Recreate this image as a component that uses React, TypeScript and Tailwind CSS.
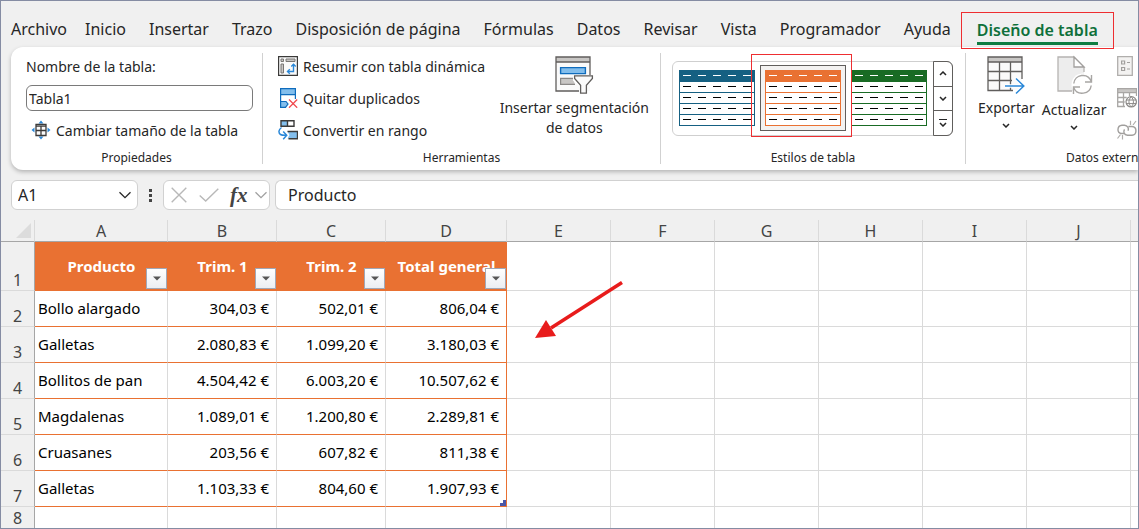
import { useState } from "react";
import type { ReactNode } from "react";

const TABS = [
  "Archivo",
  "Inicio",
  "Insertar",
  "Trazo",
  "Disposición de página",
  "Fórmulas",
  "Datos",
  "Revisar",
  "Vista",
  "Programador",
  "Ayuda",
];

const HEADERS = ["Producto", "Trim. 1", "Trim. 2", "Total general"];

const ROWS = [
  ["Bollo alargado", "304,03 €", "502,01 €", "806,04 €"],
  ["Galletas", "2.080,83 €", "1.099,20 €", "3.180,03 €"],
  ["Bollitos de pan", "4.504,42 €", "6.003,20 €", "10.507,62 €"],
  ["Magdalenas", "1.089,01 €", "1.200,80 €", "2.289,81 €"],
  ["Cruasanes", "203,56 €", "607,82 €", "811,38 €"],
  ["Galletas", "1.103,33 €", "804,60 €", "1.907,93 €"],
];

const COLUMNS = ["A", "B", "C", "D", "E", "F", "G", "H", "I", "J"];
const EMPTY = COLUMNS.slice(4);

const STYLES = [
  { name: "Azul", color: "#156082" },
  { name: "Naranja", color: "#e97132" },
  { name: "Verde", color: "#196b24" },
];

function Chevron({ up = false, className = "" }: { up?: boolean; className?: string }) {
  return (
    <svg width="8" height="5" viewBox="0 0 8 5" fill="none" className={className}>
      <path d={up ? "M1 4l3-3 3 3" : "M1 1l3 3 3-3"} stroke="currentColor" strokeWidth="1.5" />
    </svg>
  );
}

function WideChevron() {
  return (
    <svg width="12" height="8" viewBox="0 0 12 8" fill="none">
      <path d="M.5 1.2L6 6.7l5.500-5.500" stroke="currentColor" strokeWidth="1.3" />
    </svg>
  );
}

function ResizeIcon() {
  return (
    <svg width="20" height="20" viewBox="0 0 20 20" fill="none">
      <path d="M10 .5l2.500 3h-5zM10 19.500l2.500-3h-5zM.5 10l3-2.500v5zM19.500 10l-3-2.500v5z" fill="#2b88d8" />
      <path d="M5 4.500h10v11H5z" fill="#fafafa" stroke="#3b3a39" strokeWidth="1.300" />
      <path d="M5 6.200h10M5 10.500h10M10 6v9.500" stroke="#3b3a39" strokeWidth="1.300" />
    </svg>
  );
}

function PivotIcon() {
  return (
    <svg width="20" height="20" viewBox="0 0 20 20" fill="none">
      <path d="M.6.600h18.800v18.800H.6z" fill="#fafafa" stroke="#3b3a39" strokeWidth="1.200" />
      <path d="M3 3h2.500v2.500H3zM8 3h9v2.500H8zM3 8h2.500v9H3z" fill="#c8c6c4" stroke="#797775" />
      <path d="M15.500 8.500v7H10" stroke="#2b88d8" strokeWidth="1.400" />
      <path d="M13.300 10.500L15.500 8.200l2.200 2.300M11.800 13.300l-2.300 2.200 2.300 2.200" stroke="#2b88d8" strokeWidth="1.400" />
    </svg>
  );
}

function DuplicatesIcon() {
  return (
    <svg width="20" height="20" viewBox="0 0 20 20" fill="none">
      <path d="M2.600.600h14.800v6H2.600z" fill="#83beec" stroke="#0f6cbd" strokeWidth="1.200" />
      <path d="M2.600 7v12.400H8M17.400 7v4" stroke="#0f6cbd" strokeWidth="1.200" />
      <path d="M2.600 13.500H8l2 2.500-2.500 3.400H2.600z" fill="#83beec" stroke="#0f6cbd" strokeWidth="1.200" />
      <path d="M11 11.500l8.200 8.200M19.200 11.500L11 19.700" stroke="#f0494e" strokeWidth="1.300" />
    </svg>
  );
}

function RangeIcon() {
  return (
    <svg width="20" height="20" viewBox="0 0 20 20" fill="none">
      <path d="M3 .700h6.500v5.600H3z" fill="#83beec" />
      <path d="M3 .700h13v5.600H3zM9.500.700v5.600" stroke="#3b3a39" strokeWidth="1.400" />
      <path d="M9.500 11.500h10v7h-10l2-3.500z" fill="#83beec" />
      <path d="M9.500 11.500h10v7.200h-9" stroke="#3b3a39" strokeWidth="1.400" />
      <path d="M3.500 7.500C.5 9.500.2 13 2.500 14.500c1.500 1 3.500.800 6 .800M5.200 11.500l3.500 3.800-3.500 4" stroke="#2b88d8" strokeWidth="1.500" />
    </svg>
  );
}

function SlicerIcon() {
  return (
    <svg width="40" height="40" viewBox="0 0 40 40" fill="none">
      <path d="M2 2h34v34H2z" fill="#fafafa" />
      <path d="M2 2h34v5H2z" fill="#c8c6c4" />
      <path d="M26 36H2V2h34v18M2 7h34" stroke="#605e5c" strokeWidth="1.300" />
      <path d="M6.600 12.600h24.800v6H6.600z" fill="#83beec" stroke="#0f6cbd" strokeWidth="1.400" />
      <path d="M21 29.400H6.600v-6H19" fill="#c8c6c4" stroke="#8a8886" strokeWidth="1.200" />
      <path d="M19 20h20.500v4.500l-6.500 6.500v8h-8v-8L19 25.500z" fill="#fff" />
      <path d="M20.600 20.800h17.800v2.700l-6 6.700v8h-5.800v-8l-6-6.700z" fill="#fafafa" stroke="#605e5c" strokeWidth="1.300" />
    </svg>
  );
}

function ExportIcon() {
  return (
    <svg width="40" height="40" viewBox="0 0 40 40" fill="none">
      <path d="M2 2h34v33H2z" fill="#fafafa" />
      <path d="M2 2h34v5H2z" fill="#c8c6c4" />
      <path d="M27 35.500H2V2h34v22M2 7h34M2 16.500h34M2 25.500h24M13.500 7v28.500M24.500 7v28.500" stroke="#605e5c" strokeWidth="1.300" />
      <path d="M19 31h18.500M30 23.500l7.800 7.500-7.800 7.500" stroke="#fff" strokeWidth="3.500" />
      <path d="M19 31h18.500M30 23.500l7.800 7.500-7.800 7.500" stroke="#2b88d8" strokeWidth="1.500" />
    </svg>
  );
}

function RefreshIcon() {
  return (
    <svg width="40" height="40" viewBox="0 0 40 40" fill="none">
      <path d="M4 2h16l10 11v23H4z" fill="#ededed" />
      <path d="M18 36H4V2h16l10 10v5" stroke="#b5b3b1" strokeWidth="1.300" />
      <path d="M20 2v10h10z" fill="#fff" stroke="#a19f9d" strokeWidth="1.300" />
      <circle cx="28.500" cy="29.500" r="11" fill="#fff" />
      <path d="M19.800 28.500c.8-9 14-11.500 17.500-2M37.500 20v7H31M37.200 30.500c-1 8.800-14 11-17.500 2M19.500 39v-7H26" stroke="#a8a6a4" strokeWidth="1.400" />
    </svg>
  );
}

function PropertiesIcon() {
  return (
    <svg width="20" height="20" viewBox="0 0 20 20" fill="none">
      <path d="M.7.700h14.600v18.600H.7z" fill="#f3f2f1" stroke="#b0aeac" strokeWidth="1.300" />
      <path d="M4.600 5h3v3h-3zM4.600 11.500h3v3h-3zM10 6.500h3M10 13h3" stroke="#a19f9d" strokeWidth="1.200" />
    </svg>
  );
}

function BrowserIcon() {
  return (
    <svg width="20" height="20" viewBox="0 0 20 20" fill="none">
      <path d="M.7.700h19v4H.7z" fill="#c8c6c4" />
      <path d="M8 18.500H.7V.700h18.800V8M.7 4.700h19M.7 9.500h9M.7 14h7M6.500 5v13.500M12.500 5v3" stroke="#a8a6a4" strokeWidth="1.300" />
      <circle cx="14.200" cy="13.800" r="5.200" fill="#fff" stroke="#8a8886" strokeWidth="1.200" />
      <path d="M9 12h10.400M9 15.600h10.400M14.200 8.600c-3 3.500-3 7 0 10.400M14.200 8.600c3 3.500 3 7 0 10.400" stroke="#8a8886" />
    </svg>
  );
}

function UnlinkIcon() {
  return (
    <svg width="20" height="20" viewBox="0 0 20 20" fill="none">
      <path d="M7 13.500H4.500C-.5 13 0 5.500 5 5.200h2.500c3 .2 4.700 3 3.500 5.500M11.500 6.500h3.500c5.500.500 5 8.500 0 8.800h-4.500c-3.500-.3-4.500-3.500-3-6" stroke="#a19f9d" strokeWidth="1.400" />
      <path d="M13.500 5V.800M16 5l3-4M5.500 15v4.500M3.500 14.500l-3 4" stroke="#b0aeac" strokeWidth="1.200" />
    </svg>
  );
}

function StyleThumb({ color }: { color: string }) {
  return (
    <svg width="76" height="56" viewBox="0 0 76 56" fill="none" shapeRendering="crispEdges">
      <path d="M0 0h76v56H0z" fill="#fff" />
      <path d="M0 0h76v12H0z" fill={color} />
      <path d="M.5.500h75v55H.5zM0 22.500h76M0 33.500h76M0 44.500h76" stroke={color} />
      <path d="M4 5.500h68" stroke="#fff" strokeDasharray="8 7" />
      <path d="M4 16.500h68M4 27.500h68M4 38.500h68M4 49.500h68" stroke="#000" strokeDasharray="8 7" />
    </svg>
  );
}

function Group({ label, className, children }: { label: string; className: string; children: ReactNode }) {
  return (
    <section className={`flex shrink-0 flex-col border-r border-[#d1d1d1] ${className}`}>
      <div className="flex-1">{children}</div>
      <h2 className="text-center text-[12px] leading-3 whitespace-nowrap">{label}</h2>
    </section>
  );
}

function ToolButton({ icon, children }: { icon: ReactNode; children: ReactNode }) {
  return (
    <button className="flex h-8 items-center gap-[5px] whitespace-nowrap">
      {icon}
      {children}
    </button>
  );
}

export default function App() {
  const [tableName, setTableName] = useState("Tabla1");
  const [cell, setCell] = useState("A1");
  const [formula, setFormula] = useState("Producto");
  const [style, setStyle] = useState("Naranja");

  return (
    <div className="w-full overflow-hidden border border-[#858ca3] bg-[#f0f0f0] font-['Noto_Sans','Open_Sans',sans-serif] text-[14px] text-[#262626]">
      <nav className="flex h-[46px] items-end gap-[23px] pl-[10px] text-[16px] whitespace-nowrap">
        {TABS.map((tab) => (
          <button key={tab} className="h-9 first:-mr-[5px]">
            {tab}
          </button>
        ))}
        <div className="z-10 -mb-[2px] -ml-[13px] h-[37px] border border-[#ee2e31] px-[15px]">
          <button className="h-8 border-b-3 border-[#107c41] pt-[5px] leading-6 font-semibold text-[#0f703b]">
            Diseño de tabla
          </button>
        </div>
      </nav>

      <div className="ml-[10px] flex h-[123px] overflow-hidden rounded-l-xl bg-white pt-[6px] pb-[6px] shadow-[0_2px_4px_rgba(0,0,0,0.25)]">
        <Group label="Propiedades" className="w-[252px]">
          <div className="pr-[9px] pl-[15px]">
            <label htmlFor="table-name" className="block h-8 pt-1 leading-5">
              Nombre de la tabla:
            </label>
            <input
              id="table-name"
              className="block h-[26px] w-full rounded-md border border-[#7a7a7a] bg-white px-[2px] outline-none"
              value={tableName}
              onChange={(e) => setTableName(e.target.value)}
            />
            <div className="pt-[3px] pl-[5px]">
              <ToolButton icon={<ResizeIcon />}>Cambiar tamaño de la tabla</ToolButton>
            </div>
          </div>
        </Group>

        <Group label="Herramientas" className="w-[398px]">
          <div className="flex justify-between pr-[11px] pl-[15px]">
            <div className="-mt-[3px]">
              <ToolButton icon={<PivotIcon />}>Resumir con tabla dinámica</ToolButton>
              <ToolButton icon={<DuplicatesIcon />}>Quitar duplicados</ToolButton>
              <ToolButton icon={<RangeIcon />}>Convertir en rango</ToolButton>
            </div>
            <button className="flex flex-col items-center pt-[2px] leading-5">
              <SlicerIcon />
              <span className="pt-[3px]">
                Insertar segmentación
                <br />
                de datos
              </span>
            </button>
          </div>
        </Group>

        <Group label="Estilos de tabla" className="w-[305px]">
          <div className="mt-2 ml-[11px] flex h-[75px] w-[281px] rounded-md border border-[#cfcfcf]">
            <div className="flex flex-1 items-start pt-[3px] pl-px">
              {STYLES.map((s) => (
                <div key={s.name} className="relative">
                  <button
                    aria-label={s.name}
                    aria-pressed={style === s.name}
                    onClick={() => setStyle(s.name)}
                    className="block border border-transparent p-1 aria-pressed:border-[#605e5c] aria-pressed:bg-[#f3f2f1]"
                  >
                    <StyleThumb color={s.color} />
                  </button>
                  {s.name === "Naranja" && (
                    <span className="pointer-events-none absolute -top-[11px] -right-[6px] -bottom-[6px] -left-[9px] z-10 border border-[#ee2e31]" />
                  )}
                </div>
              ))}
            </div>
            <div className="-my-px -mr-px flex w-5 flex-col divide-y divide-[#605e5c] rounded-r-md border border-[#605e5c]">
              <button aria-label="Anterior" className="flex flex-1 items-center justify-center">
                <Chevron up />
              </button>
              <button aria-label="Siguiente" className="flex flex-1 items-center justify-center">
                <Chevron />
              </button>
              <button aria-label="Más" className="flex flex-1 flex-col items-center justify-center gap-[2px]">
                <span className="w-2 border-t border-[#262626]" />
                <Chevron />
              </button>
            </div>
          </div>
        </Group>

        <section className="flex min-w-0 flex-1 flex-col">
          <div className="flex flex-1 items-start">
            <button className="ml-3 flex shrink-0 flex-col items-center pt-[2px] leading-5">
              <ExportIcon />
              <span className="pt-[3px]">Exportar</span>
              <Chevron className="mt-[5px]" />
            </button>
            <button className="ml-[7px] flex shrink-0 flex-col items-center pt-[2px] leading-5">
              <RefreshIcon />
              <span className="pt-[5px]">Actualizar</span>
              <Chevron className="mt-[5px]" />
            </button>
            <div className="ml-[11px] flex shrink-0 flex-col gap-3 pt-[3px]">
              <button aria-label="Propiedades">
                <PropertiesIcon />
              </button>
              <button aria-label="Abrir en el explorador">
                <BrowserIcon />
              </button>
              <button aria-label="Desvincular">
                <UnlinkIcon />
              </button>
            </div>
          </div>
          <h2 className="pl-[100px] text-[12px] leading-3 whitespace-nowrap">Datos externos</h2>
        </section>
      </div>

      <div className="mt-[10px] ml-[10px] flex h-[30px] items-stretch text-[16px]">
        <div className="flex w-[127px] items-center rounded-md border border-[#d1d1d1] bg-white px-[6px]">
          <input
            aria-label="Cuadro de nombres"
            className="w-full min-w-0 outline-none"
            value={cell}
            onChange={(e) => setCell(e.target.value)}
          />
          <button aria-label="Nombres">
            <WideChevron />
          </button>
        </div>
        <div className="flex w-[25px] flex-col items-center justify-center gap-[2px]">
          <span className="h-[3px] w-[3px] bg-[#444]" />
          <span className="h-[3px] w-[3px] bg-[#444]" />
          <span className="h-[3px] w-[3px] bg-[#444]" />
        </div>
        <div className="flex w-[107px] items-center justify-between rounded-md border border-[#d1d1d1] bg-white pr-[2px] pl-[7px]">
          <button aria-label="Cancelar">
            <svg width="16" height="16" viewBox="0 0 16 16" fill="none">
              <path d="M.7.700l14.600 14.600M15.300.700L.7 15.300" stroke="#b8b8b8" strokeWidth="1.400" />
            </svg>
          </button>
          <button aria-label="Introducir" className="ml-1">
            <svg width="20" height="14" viewBox="0 0 20 14" fill="none">
              <path d="M.7 7.500l6 5.500L19.300.700" stroke="#b8b8b8" strokeWidth="1.400" />
            </svg>
          </button>
          <button className="ml-1 font-['Liberation_Serif',serif] text-[21px] leading-6 font-bold text-[#444] italic">
            fx
          </button>
          <button aria-label="Funciones" className="text-[#a0a0a0]">
            <WideChevron />
          </button>
        </div>
        <input
          aria-label="Barra de fórmulas"
          className="ml-[5px] min-w-0 flex-1 rounded-l-md border border-r-0 border-[#d1d1d1] bg-white pl-3 outline-none"
          value={formula}
          onChange={(e) => setFormula(e.target.value)}
        />
      </div>

      <div className="relative mt-[10px] overflow-hidden">
        <table className="w-full table-fixed border-separate border-spacing-0 text-[15px] text-black">
          <colgroup>
            <col className="w-[34px]" />
            <col className="w-[133px]" />
            <col className="w-[109px]" />
            <col className="w-[109px]" />
            <col className="w-[121px]" />
            {EMPTY.map((c) => (
              <col key={c} className="w-[104px]" />
            ))}
            <col />
          </colgroup>
          <thead>
            <tr className="h-[22px] text-[16px] leading-5 text-[#444]">
              <th className="border-r border-b border-r-[#dadada] border-b-[#a6a6a6] p-0 pr-[3px] pb-[3px] align-bottom">
                <svg width="15" height="15" viewBox="0 0 15 15" className="ml-auto block">
                  <path d="M15 0v15H0z" fill="#dcdcdc" />
                </svg>
              </th>
              {COLUMNS.map((c) => (
                <th key={c} className="border-r border-b border-r-[#dadada] border-b-[#a6a6a6] p-0 font-normal">
                  {c}
                </th>
              ))}
              <td className="border-b border-[#a6a6a6] p-0" />
            </tr>
          </thead>
          <tbody>
            <tr className="h-[49px]">
              <th className="border-r border-b border-r-[#a6a6a6] border-b-[#dadada] p-0 align-bottom text-[16px] leading-5 font-normal text-[#444]">
                1
              </th>
              {HEADERS.map((h) => (
                <td key={h} className="relative bg-[#e97132] p-0 text-center font-bold whitespace-nowrap text-white">
                  {h}
                  <button
                    aria-label={`Filtrar ${h}`}
                    className="absolute right-px bottom-[2px] flex h-[21px] w-[21px] items-center justify-center border border-[#a0a8b8] bg-linear-to-b from-white to-[#eceef2]"
                  >
                    <svg width="8" height="5" viewBox="0 0 8 5">
                      <path d="M0 .500h8L4 4.500z" fill="#555" />
                    </svg>
                  </button>
                </td>
              ))}
              {EMPTY.map((c) => (
                <td key={c} className="border-r border-b border-[#dadada] bg-white" />
              ))}
              <td className="border-b border-[#dadada] bg-white p-0" />
            </tr>
            {ROWS.map((row, i) => (
              <tr key={i} className="h-9">
                <th className="border-r border-b border-r-[#a6a6a6] border-b-[#dadada] p-0 align-bottom text-[16px] leading-5 font-normal text-[#444]">
                  {i + 2}
                </th>
                {row.map((value, j) => (
                  <td
                    key={j}
                    className="relative border-r border-b border-[#dadada] border-b-[#e97132] bg-white p-0 pr-[7px] text-right nth-2:pl-[3px] nth-2:text-left nth-5:border-r-[#e97132]"
                  >
                    {value}
                    {i === 5 && j === 3 && (
                      <svg width="6" height="6" viewBox="0 0 6 6" className="absolute right-0 bottom-0">
                        <path d="M0 6V3h3V0h3v6z" fill="#4a57a8" />
                      </svg>
                    )}
                  </td>
                ))}
                {EMPTY.map((c) => (
                  <td key={c} className="border-r border-b border-[#dadada] bg-white" />
                ))}
                <td className="border-b border-[#dadada] bg-white p-0" />
              </tr>
            ))}
            <tr className="h-[21px]">
              <th className="border-r border-r-[#a6a6a6] p-0 text-[16px] leading-5 font-normal text-[#444]">8</th>
              {COLUMNS.map((c) => (
                <td key={c} className="border-r border-[#dadada] bg-white" />
              ))}
              <td className="bg-white p-0" />
            </tr>
          </tbody>
        </table>

        {/* arrow pointing at the table from column E */}
        <svg width="92" height="62" viewBox="0 0 92 62" className="absolute top-[60px] left-[532px]">
          <path d="M89 2.500L18 48" stroke="#e81c1c" strokeWidth="3.500" />
          <path d="M2 58l11-18 10 16z" fill="#e81c1c" />
        </svg>
      </div>
    </div>
  );
}
